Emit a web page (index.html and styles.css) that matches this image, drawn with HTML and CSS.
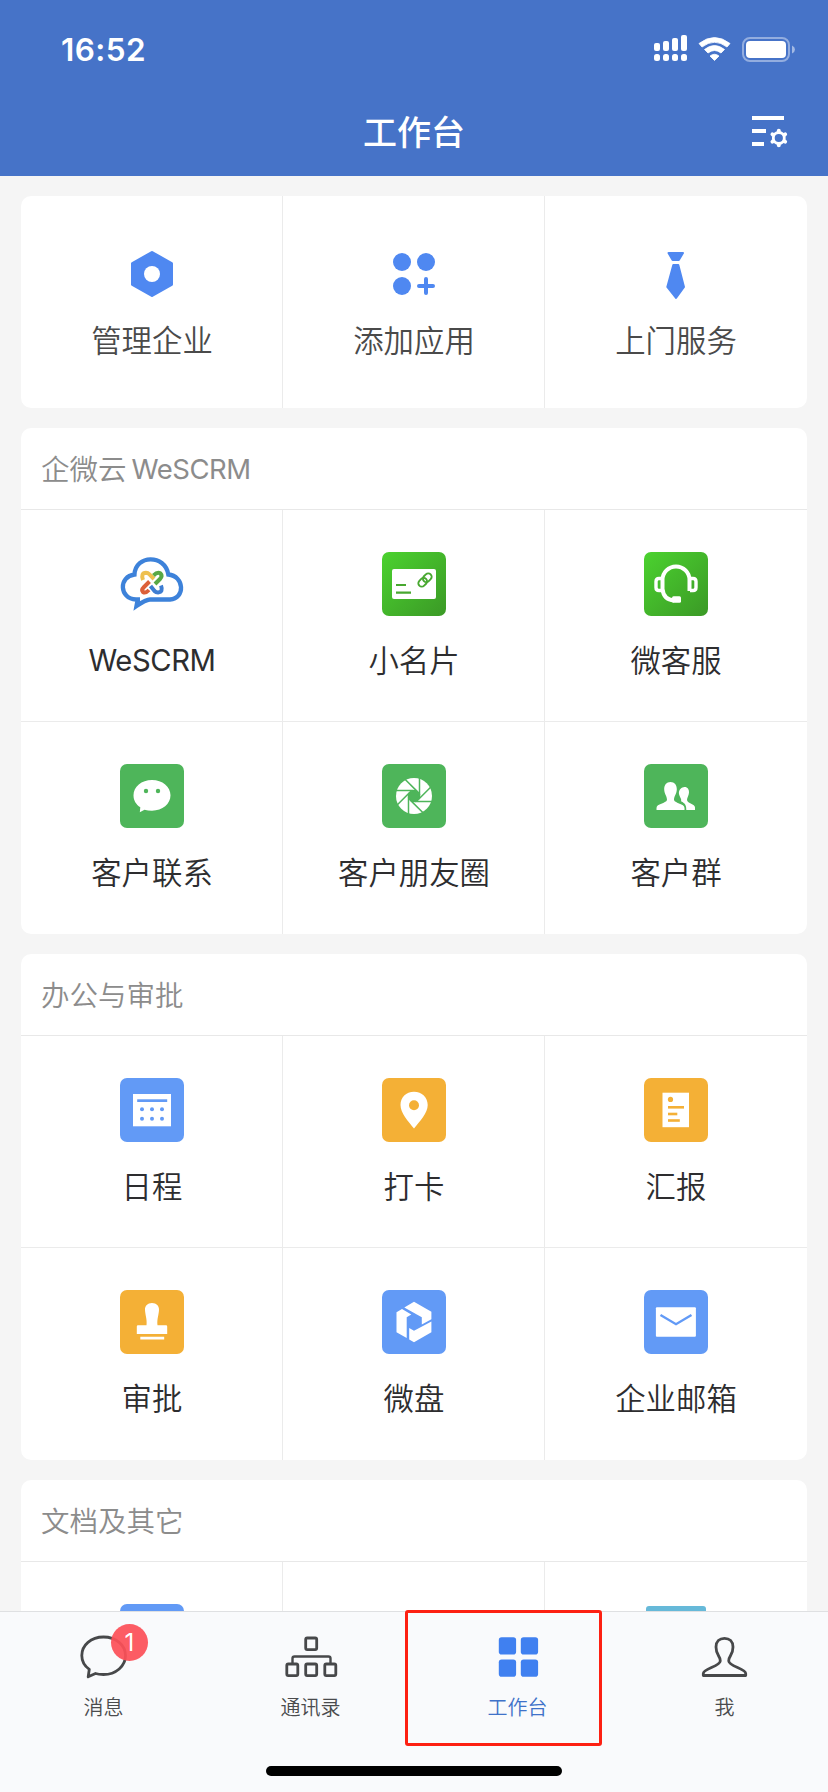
FILE: index.html
```html
<!DOCTYPE html>
<html lang="zh-CN">
<head>
<meta charset="utf-8">
<title>工作台</title>
<link rel="stylesheet" href="styles.css">
</head>
<body>
<div class="screen">
  <header class="header">
    <div class="status">
      <span class="time">16:52</span>
      <svg class="status-icons" width="144" height="32" viewBox="0 0 144 32" fill="#fff">
        <rect x="3" y="11" width="6" height="8" rx="2"/><rect x="12" y="9" width="6" height="10" rx="2"/><rect x="21" y="6" width="6" height="13" rx="2"/><rect x="30" y="3" width="6" height="16" rx="2"/>
        <rect x="3" y="22" width="6" height="7" rx="2.5"/><rect x="12" y="22" width="6" height="7" rx="2.5"/><rect x="21" y="22" width="6" height="7" rx="2.5"/><rect x="30" y="22" width="6" height="7" rx="2.5"/>
        <path d="M48 11.500Q63.500 -.500 79 11.500L76 15Q63.500 5.500 51 15ZM53.500 17.500Q63.500 9.500 73.500 17.500L70 21Q63.500 16 57 21ZM59 24Q63.500 20.500 68 24L63.500 28.500Z" stroke="#fff" stroke-width=".8" stroke-linejoin="round"/>
        <rect x="92" y="6" width="46" height="23" rx="7" fill="none" stroke="#fff" stroke-opacity=".42" stroke-width="2"/>
        <rect x="95" y="9" width="40" height="17" rx="4"/>
        <path d="M141 13.500Q144 15 144 17.500T141 21.500Z" fill-opacity=".5"/>
      </svg>
    </div>
    <div class="titlebar">
      <h1 class="title">工作台</h1>
      <svg class="settings" width="40" height="36" viewBox="0 0 40 36" fill="#fff">
        <rect x="2" y="2" width="32" height="4"/><rect x="2" y="15" width="14" height="4"/><rect x="2" y="28" width="12" height="4"/>
        <circle cx="28.800" cy="24" r="5.500" fill="none" stroke="#fff" stroke-width="2.800"/>
        <g stroke="#fff" stroke-width="4" stroke-linecap="round"><path d="M28.800 16.800v.5M28.800 30.700v.5M22.500 20.400l.5.3M34.600 27.300l.5.3M22.500 27.600l.5-.3M34.600 20.700l.5-.3"/></g>
      </svg>
    </div>
  </header>

  <main class="content">
    <section class="card card-top">
      <div class="grid">
        <div class="cell"><svg class="icon" viewBox="0 0 64 64"><path d="M32 10.500L51.500 21.500V42.500L32 53.500L12.500 42.500V21.500Z" fill="#4f88f1" stroke="#4f88f1" stroke-width="3" stroke-linejoin="round"/><circle cx="32" cy="32" r="8" fill="#fff"/></svg><span class="label">管理企业</span></div>
        <div class="cell"><svg class="icon" viewBox="0 0 64 64" fill="#4f88f1"><circle cx="20" cy="20" r="9"/><circle cx="44" cy="20" r="9"/><circle cx="20" cy="44" r="9"/><path d="M44 37v14M37 44h14" stroke="#4f88f1" stroke-width="4" stroke-linecap="round"/></svg><span class="label">添加应用</span></div>
        <div class="cell"><svg class="icon" viewBox="0 0 64 64" fill="#4f88f1" stroke="#4f88f1" stroke-width="2" stroke-linejoin="round"><path d="M24.500 11H39L34.800 18H28.600ZM29.300 23H34.300L40 45L32 56L23.300 45Z"/></svg><span class="label">上门服务</span></div>
      </div>
    </section>

    <section class="card">
      <h2 class="card-title">企微云<span class="latin">WeSCRM</span></h2>
      <div class="grid">
        <div class="cell"><svg class="icon" viewBox="0 0 64 64" fill="none" stroke-linejoin="round">
          <path d="M20 47.500H16C-1 46.500 -1.500 24.500 14.500 22.500C15.500 2.500 45 2 48.300 22.500C64.500 24 65.500 46.500 50 47.500H30Q26 47.500 16.500 54L18 46" stroke="#3d82da" stroke-width="4.300" stroke-linejoin="miter"/>
          <g stroke-width="4"><path d="M23 28Q20.500 21 26 20.800Q28 20.800 29.500 22.300L34 27" stroke="#eec04f"/><path d="M33.500 23.500Q37.500 19.500 40.500 21.500Q43 24 40 27L35 32" stroke="#58a846"/><path d="M41 33.500Q43.500 40 38 40.500Q36 40.500 34.500 39L30.500 34" stroke="#3d7dd2"/><path d="M29.500 29.500L24 35Q21 38 23 40Q25.500 41.700 29 38" stroke="#dc6039"/></g>
        </svg><span class="label latin-label">WeSCRM</span></div>
        <div class="cell"><svg class="icon" viewBox="0 0 64 64"><defs><linearGradient id="green" x1="0" y1="0" x2="1" y2="1"><stop offset="0" stop-color="#4bd22f"/><stop offset="1" stop-color="#3b9926"/></linearGradient></defs><rect width="64" height="64" rx="7" fill="url(#green)"/><rect x="10" y="17" width="44" height="30" rx="2" fill="#fff"/><path d="M14 33h10M14 40.700h15" stroke="#48a830" stroke-width="2.200"/><g fill="none" stroke="#48a830" stroke-width="1.900" transform="rotate(-45 43 28)"><rect x="35" y="24.600" width="9.500" height="6.800" rx="3.400"/><rect x="41.500" y="24.600" width="9.500" height="6.800" rx="3.400"/></g></svg><span class="label">小名片</span></div>
        <div class="cell"><svg class="icon" viewBox="0 0 64 64"><rect width="64" height="64" rx="7" fill="url(#green)"/><g fill="none" stroke="#fff" stroke-width="4"><path d="M18.500 39V28A13.500 13.500 0 0 1 45.500 28V39M18.500 37Q19.500 47.500 30 48.500"/><path d="M18 26.500h-3q-3 0-3 3v6q0 3 3 3h3M46 26.500h3q3 0 3 3v6q0 3-3 3h-3" stroke-width="3.400"/></g><rect x="28" y="44.300" width="9" height="6.500" rx="1.500" fill="#fff"/></svg><span class="label">微客服</span></div>
        <div class="cell"><svg class="icon" viewBox="0 0 64 64"><rect width="64" height="64" rx="7" fill="#4eb55a"/><path d="M32 16C42.500 16 50.500 22.700 50.500 31.300S42.500 46.700 32 46.700Q28 46.700 24.500 45.700L19.800 48.200L20.300 43.300C16 40.500 13.500 36.500 13.500 31.300C13.500 22.700 21.500 16 32 16Z" fill="#fff"/><circle cx="26" cy="27" r="2.200" fill="#4eb55a"/><circle cx="38" cy="27" r="2.200" fill="#4eb55a"/></svg><span class="label">客户联系</span></div>
        <div class="cell"><svg class="icon" viewBox="0 0 64 64"><rect width="64" height="64" rx="7" fill="#4eb55a"/><circle cx="32" cy="32" r="18" fill="#fff"/><g transform="translate(32 32)" stroke="#4eb55a" stroke-width="1.500"><circle r="5.600" fill="#4eb55a"/><path id="blade" d="M5.500 -19V-1"/><use href="#blade" transform="rotate(45)"/><use href="#blade" transform="rotate(90)"/><use href="#blade" transform="rotate(135)"/><use href="#blade" transform="rotate(180)"/><use href="#blade" transform="rotate(225)"/><use href="#blade" transform="rotate(270)"/><use href="#blade" transform="rotate(315)"/></g></svg><span class="label">客户朋友圈</span></div>
        <div class="cell"><svg class="icon" viewBox="0 0 64 64"><rect width="64" height="64" rx="7" fill="#4eb55a"/><path d="M39.500 23.200C43 22.400 45.200 25 45 28.500C44.900 31.500 43 33.500 43 36C43.500 39.500 51 40 51 43.500V46H42.300C42.300 41.500 41.500 39.500 37 37.200C38 35 35.500 33 35 30C34.600 26.500 36.500 23.600 39.500 23.200Z" fill="#fff"/><path d="M26.500 18C30.500 18 33 21 32.800 25.500C32.700 30 30 32 30 36C31 39.500 40.500 39.500 40.500 44V46H12.500V44C12.500 39.500 22 39.500 23 36C23 32 20.300 30 20.200 25.500C20 21 22.500 18 26.500 18Z" fill="#fff"/></svg><span class="label">客户群</span></div>
      </div>
    </section>

    <section class="card">
      <h2 class="card-title">办公与审批</h2>
      <div class="grid">
        <div class="cell"><svg class="icon" viewBox="0 0 64 64"><rect width="64" height="64" rx="7" fill="#629af6"/><rect x="13" y="16" width="38" height="32.300" fill="#fff"/><g fill="#629af6"><rect x="17.200" y="21.300" width="30" height="2.700"/><circle cx="22" cy="31.300" r="2"/><circle cx="32" cy="31.300" r="2"/><circle cx="42" cy="31.300" r="2"/><circle cx="22" cy="40.700" r="2"/><circle cx="32" cy="40.700" r="2"/><circle cx="42" cy="40.700" r="2"/></g></svg><span class="label">日程</span></div>
        <div class="cell"><svg class="icon" viewBox="0 0 64 64"><rect width="64" height="64" rx="7" fill="#f4b036"/><path d="M32 13.800C40 13.800 45.700 19.500 45.700 27C45.700 35 38 43 32 50.500C26 43 18.500 35 18.500 27C18.500 19.500 24 13.800 32 13.800Z" fill="#fff"/><circle cx="32" cy="27.300" r="5" fill="#f4b036"/></svg><span class="label">打卡</span></div>
        <div class="cell"><svg class="icon" viewBox="0 0 64 64"><rect width="64" height="64" rx="7" fill="#f4b036"/><rect x="18.500" y="14.700" width="26.500" height="34.500" fill="#fff"/><g fill="#f4b036"><circle cx="26.500" cy="21.400" r="2.600"/><rect x="24" y="28" width="16" height="2.600"/><rect x="24" y="34.700" width="9.300" height="2.600"/><rect x="24" y="41.200" width="11.800" height="2.600"/></g></svg><span class="label">汇报</span></div>
        <div class="cell"><svg class="icon" viewBox="0 0 64 64"><rect width="64" height="64" rx="7" fill="#f4b036"/><path d="M32 13C36.500 13 39.200 16 39 20C38.800 25 36.800 29 37.500 35.300H46Q47.200 35.300 47.200 36.500V44H16.800V36.500Q16.800 35.300 18 35.300H26.500C27.200 29 25.200 25 25 20C24.800 16 27.500 13 32 13ZM20.300 46.700H44.200V49.500H20.300Z" fill="#fff"/></svg><span class="label">审批</span></div>
        <div class="cell"><svg class="icon" viewBox="0 0 64 64"><rect width="64" height="64" rx="7" fill="#629af6"/><path d="M32 11.700L49.400 21.700V29.300L39.800 34.500V27.300L22.300 17.500ZM20 19L29.300 24.400L24.700 27.300V48L14.500 42.200V22.200ZM49.400 31.500V42.200L32 52.300L27.200 49.500V38L32 40.700Z" fill="#fff"/></svg><span class="label">微盘</span></div>
        <div class="cell"><svg class="icon" viewBox="0 0 64 64"><rect width="64" height="64" rx="7" fill="#629af6"/><rect x="11.900" y="17.200" width="40" height="29.600" rx="1" fill="#fff"/><path d="M16.500 25L32 34.200L47.500 25" fill="none" stroke="#629af6" stroke-width="2.400"/></svg><span class="label">企业邮箱</span></div>
      </div>
    </section>

    <section class="card">
      <h2 class="card-title">文档及其它</h2>
      <div class="grid">
        <div class="cell"><svg class="icon" viewBox="0 0 64 64"><rect width="64" height="64" rx="7" fill="#629af6"/></svg></div>
        <div class="cell"></div>
        <div class="cell"><svg class="icon" viewBox="0 0 64 64"><rect x="2" y="2" width="60" height="60" rx="3" fill="#66b9d9"/></svg></div>
      </div>
    </section>
  </main>

  <nav class="tabs">
    <div class="tab"><svg class="tab-icon" viewBox="0 0 60 48" fill="none" stroke="#47484a" stroke-width="2.800" stroke-linejoin="round"><path d="M29.500 5C42 5 51.500 13 51.500 23.500S42 42.500 29.500 42.500Q24.500 42.500 21.500 41.500L14.200 44.800L15.300 37.300C10.500 34 7.800 29 7.800 23.500C7.800 13 17 5 29.500 5Z"/></svg><span class="badge">1</span><span class="tab-label">消息</span></div>
    <div class="tab"><svg class="tab-icon" viewBox="0 0 60 48" fill="none" stroke="#47484a" stroke-width="2.800"><rect x="24.700" y="6" width="11" height="11.600" rx="1.500"/><rect x="5.800" y="32" width="11" height="11.600" rx="1.500"/><rect x="24.700" y="32" width="11" height="11.600" rx="1.500"/><rect x="43.800" y="32" width="11" height="11.600" rx="1.500"/><path d="M11.500 32V26.500Q11.500 24.500 13.500 24.500H47.500Q49.500 24.500 49.500 26.500V32" stroke-width="2.400"/></svg><span class="tab-label">通讯录</span></div>
    <div class="tab tab-active"><svg class="tab-icon" viewBox="0 0 60 48" fill="#4080f0"><rect x="10.800" y="5.300" width="17.300" height="17.300" rx="2.800"/><rect x="32.800" y="5.300" width="17.300" height="17.300" rx="2.800"/><rect x="10.800" y="27.400" width="17.300" height="17.300" rx="2.800"/><rect x="32.800" y="27.400" width="17.300" height="17.300" rx="2.800"/></svg><span class="tab-label">工作台</span></div>
    <div class="tab"><svg class="tab-icon" viewBox="0 0 60 48" fill="none" stroke="#47484a" stroke-width="2.800" stroke-linejoin="round"><path d="M29.500 6.300C34.500 6.300 38 9.500 38 15C38 24 33.500 23.500 33.700 29C33.900 34.500 50.700 36.500 50.700 41.500V43.500H8.300V41.500C8.300 36.500 25.100 34.500 25.300 29C25.500 23.500 21 24 21 15C21 9.500 24.500 6.300 29.500 6.300Z"/></svg><span class="tab-label">我</span></div>
    <div class="highlight"></div>
    <div class="home-indicator"></div>
  </nav>
</div>
</body>
</html>
```
FILE: styles.css
```css
* { box-sizing: border-box; }

body {
  margin: 0;
  background: #f5f5f5;
  font-family: Inter, "Noto Sans CJK SC", sans-serif;
}

.screen {
  width: 828px;
  height: 1792px;
  display: flex;
  flex-direction: column;
  overflow: hidden;
}

.header {
  flex: none;
  height: 176px;
  background: #4673c8;
  color: #fff;
}

.status {
  height: 88px;
  padding: 32px 33px 0 61px;
  display: flex;
  justify-content: space-between;
  align-items: flex-start;
}

.time {
  font-size: 31.5px;
  line-height: 36px;
  font-weight: 600;
  letter-spacing: .4px;
}

.titlebar {
  height: 88px;
  padding: 0 38px;
  display: grid;
  grid-template-columns: 40px 1fr 40px;
  align-items: center;
}

.title {
  grid-column: 2;
  margin: 2px 0 0;
  text-align: center;
  font-size: 34px;
  line-height: 44px;
  font-weight: 500;
}

.content {
  flex: 1;
  min-height: 0;
  overflow: hidden;
  padding: 20px 21px 0;
  display: flex;
  flex-direction: column;
  gap: 20px;
}

.card {
  flex: none;
  background: #fff;
  border-radius: 10px;
  overflow: hidden;
}

.card-title {
  margin: 0;
  height: 82px;
  padding: 0 0 2px 20px;
  display: flex;
  align-items: center;
  gap: 5px;
  border-bottom: 1px solid #e8e8e8;
  color: #8c8c8c;
  font-family: Inter, "Noto Sans CJK SC DemiLight", "Noto Sans CJK SC", sans-serif;
  font-size: 28.5px;
  font-weight: 350;
}

.latin {
  padding-top: 2px;
  font-size: 27.5px;
  font-weight: 400;
  letter-spacing: -.5px;
}

.grid {
  display: grid;
  grid-template-columns: repeat(3, 262px);
  grid-auto-rows: 212px;
}

.cell {
  display: flex;
  flex-direction: column;
  align-items: center;
  gap: 25px;
  padding-top: 42px;
  box-shadow: inset -1px -1px #ebebeb;
}

.cell:nth-child(3n) { box-shadow: inset 0 -1px #ebebeb; }
.cell:nth-child(n+4), .card-top .cell { box-shadow: inset -1px 0 #ebebeb; }
.cell:nth-child(6), .card-top .cell:nth-child(3) { box-shadow: none; }

.card-top .cell { padding-top: 46px; gap: 15px; }
.card-top .label { color: #4a4a4a; }

.icon {
  flex: none;
  width: 64px;
  height: 64px;
}

.label {
  font-family: Inter, "Noto Sans CJK SC DemiLight", "Noto Sans CJK SC", sans-serif;
  font-size: 30.4px;
  font-weight: 350;
  line-height: 40px;
  color: #2d2d2f;
  white-space: nowrap;
}

.latin-label { font-size: 29.2px; font-weight: 400; letter-spacing: -.4px; }

.tabs {
  position: relative;
  flex: none;
  height: 181px;
  display: grid;
  grid-template-columns: repeat(4, 207px);
  background: #f9fafc;
  border-top: 1px solid #dfe0e2;
}

.tab {
  position: relative;
  display: flex;
  flex-direction: column;
  align-items: center;
  gap: 13px;
  padding-top: 20px;
  color: #4a4b4d;
}

.tab-icon { width: 60px; height: 48px; }

.tab-label { font-size: 20px; font-weight: 350; line-height: 30px; }

.tab-active { color: #3f72c9; }

.badge {
  position: absolute;
  left: 111px;
  top: 12px;
  width: 37px;
  height: 37px;
  border-radius: 50%;
  background: rgba(252, 80, 88, .93);
  color: #fff;
  font-size: 24px;
  font-weight: 400;
  line-height: 37px;
  text-align: center;
}

.highlight {
  position: absolute;
  left: 405px;
  top: -2px;
  width: 197px;
  height: 136px;
  border: 3px solid #fd2012;
  border-radius: 3px;
}

.home-indicator {
  position: absolute;
  left: 266px;
  top: 154px;
  width: 296px;
  height: 10px;
  border-radius: 5px;
  background: #000;
}
```
